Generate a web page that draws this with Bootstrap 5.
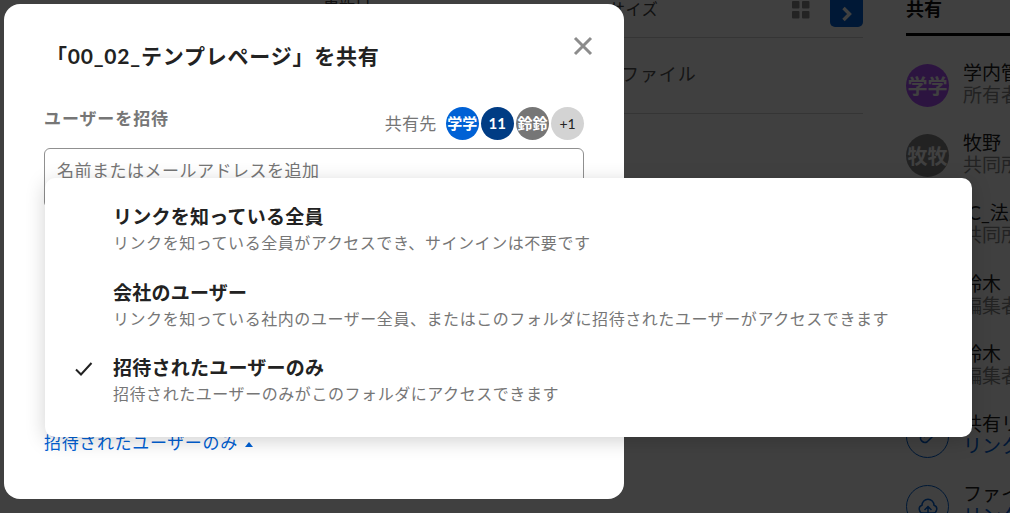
<!DOCTYPE html>
<html lang="ja">
  <head>
    <meta charset="UTF-8" />
    <meta name="viewport" content="width=device-width, initial-scale=1" />
    <title>共有</title>
    <link href="https://cdn.jsdelivr.net/npm/bootstrap@5.3.3/dist/css/bootstrap.min.css" rel="stylesheet" />
    <style>
      html, body { height: 513px; overflow: hidden; }
      body { font-family: Lato, "Noto Sans CJK JP", sans-serif; color: #222; background: #fff; position: relative; }

      /* page behind the dialog */
      .page-wrap { height: 513px; padding-left: 28px; }
      .main-col { width: 835px; flex: none; }
      .list-head { height: 38px; border-bottom: 1px solid #d3d3d3; font-size: 16px; color: #444; }
      .col-date { margin-left: 295px; margin-top: -7px; }
      .col-size { margin-left: 238px; margin-top: -3px; letter-spacing: .6px; }
      .grid-ic { margin-left: auto; margin-top: 1px; }
      .side-btn { width: 33px; height: 27px; background: #0061d5; border-radius: 0 0 5px 5px; margin-left: 20px; }
      .list-row { height: 76px; border-bottom: 1px solid #d3d3d3; font-size: 18px; padding: 0 0 2px 593px; letter-spacing: 0.9px; color: #555; }
      .side-col { margin-left: 43px; flex: 1; min-width: 0; white-space: nowrap; }
      .side-tab { height: 38px; border-bottom: 3px solid #000; font-weight: 700; font-size: 18px; line-height: 22px; color: #111; margin-bottom: 15px; margin-top: -2px; }
      .side-row { height: 70.2px; gap: 14px; }
      .side-ava { width: 43px; height: 43px; border-radius: 50%; color: #fff; font-weight: 700; font-size: 20px; flex: none; margin-top: 13px; }
      .ava-purple { background: #b04fff; }
      .ava-dark { background: #888; }
      .ring-ic { border: 1px solid #0061d5; background: transparent; }
      .side-name { font-size: 19px; line-height: 22px; color: #222; margin-top: 11px; }
      .side-role { font-size: 19px; line-height: 22px; color: #888; }
      .side-link { font-size: 19px; line-height: 22px; color: #0061d5; }

      .dim-layer { position: absolute; inset: 0; background: rgba(0, 0, 0, .75); }

      /* share dialog */
      .share-box { position: absolute; left: 4px; top: 4px; width: 620px; height: 495px; background: #fff; border-radius: 16px; padding: 0 40px; }
      .share-title { font-size: 21px; font-weight: 700; letter-spacing: .8px; margin: 37px 0 0 2px; line-height: 30px; color: #222; }
      .close-x { position: absolute; right: 31px; top: 32px; padding: 0; border: 0; background: none; line-height: 0; }
      .invite-head { margin-top: 36px; height: 33px; }
      .invite-label { font-size: 17px; font-weight: 700; letter-spacing: .9px; color: #767676; margin-top: -10px; }
      .shared-label { font-size: 17px; letter-spacing: .3px; color: #767676; margin-right: 7px; }
      .ava-row { gap: 2.1px; }
      .ava-sm { width: 33px; height: 33px; border-radius: 50%; color: #fff; font-weight: 700; font-size: 15px; flex: none; letter-spacing: 0; }
      .ava-blue { background: #0061d5; }
      .ava-navy { background: #003c84; }
      .ava-gray { background: #767676; }
      .ava-more { background: #d3d3d3; color: #222; font-weight: 400; font-size: 14px; }
      .invite-input { margin-top: 8px; height: 60px; border: 1px solid #909090; border-radius: 6px; padding: 9px 12px; font-size: 17px; letter-spacing: .5px; color: #767676; }
      .access-link { position: absolute; left: 40px; top: 426px; font-size: 17px; letter-spacing: .65px; color: #0061d5; text-decoration: none; line-height: 26px; }
      .caret-up { display: inline-block; width: 0; height: 0; border: 4.5px solid transparent; border-top: 0; border-bottom: 5px solid #0061d5; margin-left: 7px; vertical-align: middle; }

      /* access dropdown */
      .access-menu { position: absolute; left: 45px; top: 178px; width: 927px; height: 259px; background: #fff; border-radius: 10px; padding-top: 26px; box-shadow: 0 4px 20px rgba(0, 0, 0, .18); }
      .access-item { height: 75.5px; padding-left: 29px; }
      .check-slot { width: 39px; flex: none; }
      .item-title { font-size: 19px; font-weight: 700; letter-spacing: .25px; line-height: 26px; color: #222; }
      .item-desc { font-size: 16px; letter-spacing: .56px; line-height: 26px; color: #767676; white-space: nowrap; }
    </style>
  </head>
  <body>

    <!-- Page behind the dialog -->
    <div class="page-wrap d-flex">
      <div class="main-col">
        <div class="list-head d-flex align-items-start">
          <span class="col-date">更新日</span>
          <span class="col-size">サイズ</span>
          <svg class="grid-ic" width="18" height="18" viewBox="0 0 18 18" fill="#8c8c8c"><rect width="7.5" height="7.5" rx="1"/><rect x="10" width="7.5" height="7.5" rx="1"/><rect y="10" width="7.5" height="7.5" rx="1"/><rect x="10" y="10" width="7.5" height="7.5" rx="1"/></svg>
          <div class="side-btn d-flex align-items-center justify-content-center">
            <svg width="12" height="16" viewBox="0 0 12 16" fill="none" stroke="#fff" stroke-width="3.4"><path d="M2.5 2l6 6-6 6"/></svg>
          </div>
        </div>
        <div class="list-row d-flex align-items-center">ファイル</div>
      </div>

      <div class="side-col">
        <div class="side-tab">共有</div>
        <div class="side-row d-flex">
          <div class="side-ava ava-purple d-flex align-items-center justify-content-center">学学</div>
          <div><div class="side-name">学内管理者</div><div class="side-role">所有者</div></div>
        </div>
        <div class="side-row d-flex">
          <div class="side-ava ava-dark d-flex align-items-center justify-content-center">牧牧</div>
          <div><div class="side-name">牧野</div><div class="side-role">共同所有者</div></div>
        </div>
        <div class="side-row d-flex">
          <div class="side-ava ava-dark d-flex align-items-center justify-content-center">IC</div>
          <div><div class="side-name">IC_法人</div><div class="side-role">共同所有者</div></div>
        </div>
        <div class="side-row d-flex">
          <div class="side-ava ava-dark d-flex align-items-center justify-content-center">鈴鈴</div>
          <div><div class="side-name">鈴木</div><div class="side-role">編集者</div></div>
        </div>
        <div class="side-row d-flex">
          <div class="side-ava ava-dark d-flex align-items-center justify-content-center">鈴鈴</div>
          <div><div class="side-name">鈴木</div><div class="side-role">編集者</div></div>
        </div>
        <div class="side-row d-flex">
          <div class="side-ava ring-ic d-flex align-items-center justify-content-center">
            <svg width="24" height="24" viewBox="0 0 24 24" fill="none" stroke="#0061d5" stroke-width="1.5"><path d="M8 13l6-6a3 3 0 0 1 4 4l-7 7a4.500 4.500 0 0 1-6-6l6-6"/></svg>
          </div>
          <div><div class="side-name">共有リンク</div><div class="side-link">リンクを作成</div></div>
        </div>
        <div class="side-row d-flex">
          <div class="side-ava ring-ic d-flex align-items-center justify-content-center">
            <svg width="24" height="24" viewBox="0 0 24 24" fill="none" stroke="#0061d5" stroke-width="1.5"><path d="M7 18a4 4 0 0 1-1-7.800 6 6 0 0 1 12 0A4 4 0 0 1 17 18H7zM12 21v-9M8.500 15l3.500-3.500 3.500 3.500"/></svg>
          </div>
          <div><div class="side-name">ファイル</div><div class="side-link">リンクを作成</div></div>
        </div>
      </div>
    </div>

    <div class="dim-layer"></div>

    <!-- Share dialog -->
    <div class="share-box">
      <div class="share-title">「00_02_テンプレページ」を共有</div>
      <button class="close-x" type="button" aria-label="閉じる">
        <svg width="20" height="20" viewBox="0 0 20 20" fill="none" stroke="#8c8c8c" stroke-width="3"><path d="M2 2l16 16M18 2L2 18"/></svg>
      </button>
      <div class="invite-head d-flex align-items-center justify-content-between">
        <span class="invite-label">ユーザーを招待</span>
        <div class="ava-row d-flex align-items-center">
          <span class="shared-label">共有先</span>
          <div class="ava-sm ava-blue d-flex align-items-center justify-content-center">学学</div>
          <div class="ava-sm ava-navy d-flex align-items-center justify-content-center">11</div>
          <div class="ava-sm ava-gray d-flex align-items-center justify-content-center">鈴鈴</div>
          <div class="ava-sm ava-more d-flex align-items-center justify-content-center">+1</div>
        </div>
      </div>
      <div class="invite-input">名前またはメールアドレスを追加</div>
      <a class="access-link" href="#">招待されたユーザーのみ<span class="caret-up"></span></a>
    </div>

    <!-- Access level menu -->
    <div class="access-menu">
      <div class="access-item d-flex">
        <div class="check-slot"></div>
        <div>
          <div class="item-title">リンクを知っている全員</div>
          <div class="item-desc">リンクを知っている全員がアクセスでき、サインインは不要です</div>
        </div>
      </div>
      <div class="access-item d-flex">
        <div class="check-slot"></div>
        <div>
          <div class="item-title">会社のユーザー</div>
          <div class="item-desc">リンクを知っている社内のユーザー全員、またはこのフォルダに招待されたユーザーがアクセスできます</div>
        </div>
      </div>
      <div class="access-item d-flex">
        <div class="check-slot">
          <svg width="20" height="16" viewBox="0 0 20 16" fill="none" stroke="#222" stroke-width="2"><path d="M2 8.500l5 5L17.500 2"/></svg>
        </div>
        <div>
          <div class="item-title">招待されたユーザーのみ</div>
          <div class="item-desc">招待されたユーザーのみがこのフォルダにアクセスできます</div>
        </div>
      </div>
    </div>

    <script src="https://cdn.jsdelivr.net/npm/bootstrap@5.3.3/dist/js/bootstrap.bundle.min.js"></script>
  </body>
</html>
